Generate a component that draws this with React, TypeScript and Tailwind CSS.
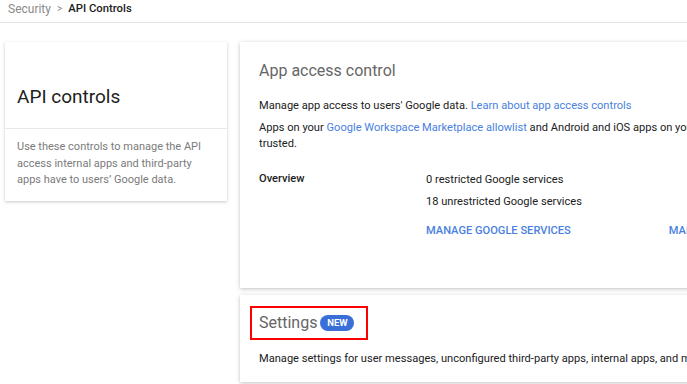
import React from "react";

export default function App() {
  const font = { fontFamily: "Roboto, 'Liberation Sans', Arial, sans-serif" };
  return (
    <div style={font} className="w-[687px] h-[384px] overflow-hidden bg-white text-[#212121]">
      <div className="h-[23px] border-b border-[#e3e3e3] flex items-start pt-[3px] pl-[8px] leading-[12px]">
        <span className="text-[#8a8a8a] text-[12px]">Security</span>
        <span className="text-[#8a8a8a] mx-[6px] text-[10px]">&gt;</span>
        <span className="font-medium text-[#212121] text-[11.3px]">API Controls</span>
      </div>
      <div className="flex pl-[5px] pt-[19px] gap-[13px]">
        <div className="w-[222px] h-[159px] shrink-0 bg-white shadow-[0_1px_3px_rgba(0,0,0,0.22)] flex flex-col">
          <div className="h-[87px] shrink-0 border-b border-[#e8e8e8] flex items-end px-[12px] pb-[17px]">
            <h1 className="text-[19px] leading-[28px] font-normal text-[#212121]">API controls</h1>
          </div>
          <p className="px-[12px] pt-[10px] text-[11px] leading-[16.5px] text-[#7b7b7b]">
            Use these controls to manage the API access internal apps and third-party apps have to users’ Google data.
          </p>
        </div>
        <div className="flex flex-col gap-[7px] w-[520px] shrink-0">
          <div className="h-[246px] bg-white shadow-[0_1px_4px_rgba(0,0,0,0.25)] pl-[19px] pt-[17px] relative">
            <h2 className="text-[16px] leading-[24px] text-[#666] font-normal">App access control</h2>
            <p className="mt-[13px] text-[11.1px] leading-[20px] whitespace-nowrap">
              Manage app access to users' Google data.{" "}
              <span className="text-[#4a7fe0]">Learn about app access controls</span>
            </p>
            <p className="mt-[4px] text-[11.1px] leading-[16px] whitespace-nowrap">
              Apps on your <span className="text-[#4a7fe0]">Google Workspace Marketplace allowlist</span> and Android and iOS apps on your mobile allowlist are
              <br />
              trusted.
            </p>
            <div className="flex mt-[19px] text-[11.1px] leading-[16px]">
              <div className="w-[167px] shrink-0 font-medium">Overview</div>
              <div className="flex flex-col pt-[1px]">
                <div>0 restricted Google services</div>
                <div className="mt-[6px]">18 unrestricted Google services</div>
                <div className="flex mt-[13px] font-medium text-[#4a7fe0] whitespace-nowrap">
                  <span>MANAGE GOOGLE SERVICES</span>
                  <span className="ml-[98px]">MANAGE THIRD-PARTY APP ACCESS</span>
                </div>
              </div>
            </div>
          </div>
          <div className="h-[87px] bg-white shadow-[0_1px_4px_rgba(0,0,0,0.25)] pl-[10px] pt-[11px]">
            <div className="inline-flex items-center border-2 border-[#ff0000] w-[118px] h-[34px] pl-[7px]">
              <span className="text-[16px] leading-[24px] text-[#666]">Settings</span>
              <span className="ml-[3px] bg-[#3a6fd8] text-white text-[9.5px] font-bold rounded-full w-[34px] h-[16px] flex items-center justify-center leading-none">NEW</span>
            </div>
            <p className="mt-[11px] pl-[9px] text-[11.1px] leading-[16px] whitespace-nowrap">
              Manage settings for user messages, unconfigured third-party apps, internal apps, and more.
            </p>
          </div>
        </div>
      </div>
    </div>
  );
}
